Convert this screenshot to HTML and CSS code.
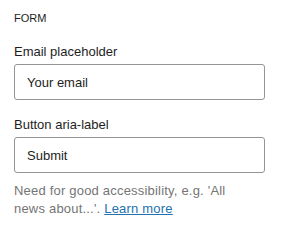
FILE: index.html
```html
<!DOCTYPE html>
<html>
<head>
<meta charset="utf-8">
<link rel="stylesheet" href="styles.css">
</head>
<body>
<div class="panel">
  <h2 class="panel-title">Form</h2>
  <div class="field">
    <label class="field-label" for="email">Email placeholder</label>
    <input class="field-input" id="email" type="text" value="Your email">
  </div>
  <div class="field">
    <label class="field-label" for="aria">Button aria-label</label>
    <input class="field-input" id="aria" type="text" value="Submit">
    <p class="field-help">Need for good accessibility, e.g. 'All news about...'. <a href="#" class="help-link">Learn more</a></p>
  </div>
</div>
</body>
</html>
```

FILE: styles.css
```css
html, body {
  margin: 0;
  padding: 0;
  background: #ffffff;
}
body {
  font-family: "Liberation Sans", Arial, sans-serif;
  color: #1e1e1e;
  font-size: 13px;
}
.panel {
  padding: 10px 16px 0 14px;
}
.panel-title {
  margin: 0 0 17px 0;
  font-size: 11px;
  font-weight: 500;
  text-transform: uppercase;
  line-height: 16px;
  color: #1e1e1e;
}
.field {
  display: flex;
  flex-direction: column;
}
.field + .field {
  margin-top: 16px;
}
.field-label {
  font-size: 13px;
  line-height: 18px;
  margin-bottom: 3px;
}
.field-input {
  box-sizing: border-box;
  width: 251px;
  height: 36px;
  margin: 0;
  padding: 0 12px;
  border: 1px solid #949494;
  border-radius: 3px;
  font-family: inherit;
  font-size: 13px;
  color: #1e1e1e;
  background: #fff;
  outline: none;
}
.field-help {
  max-width: 230px;
  margin: 9px 0 0 0;
  font-size: 13px;
  line-height: 18px;
  letter-spacing: 0.2px;
  color: #757575;
}
.help-link {
  color: #2271b1;
  text-decoration: underline;
}
```
